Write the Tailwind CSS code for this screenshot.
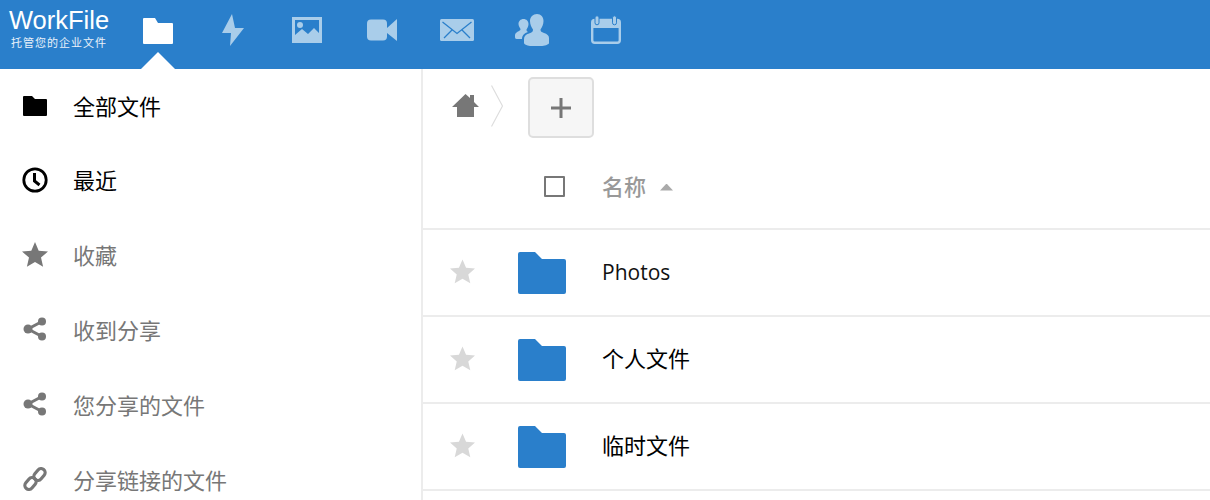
<!DOCTYPE html>
<html lang="zh-CN">
<head>
  <meta charset="UTF-8">
  <title>WorkFile</title>
  <script src="https://cdn.jsdelivr.net/npm/@tailwindcss/browser@4"></script>
</head>
<body class="bg-white h-[500px] overflow-hidden font-['Noto_Sans_CJK_SC',sans-serif]">

  <!-- Top bar -->
  <header class="flex h-[69px] bg-[#2a7fcb]">
    <div class="w-[120px] pl-[9px] pt-[6px] text-white">
      <div class="font-['Liberation_Sans',sans-serif] text-[25.500px] leading-[28px]">WorkFile</div>
      <div class="pl-[2px] text-[11px] leading-[16px] tracking-[1px] whitespace-nowrap text-white/90">托管您的企业文件</div>
    </div>
    <nav class="flex">
      <a class="relative w-[75px] flex justify-center pt-[18px]">
        <svg width="30" height="26" viewBox="0 0 30 26" fill="#fff"><path d="M1 0h11l3 5h14a1 1 0 0 1 1 1v19a1 1 0 0 1-1 1H1a1 1 0 0 1-1-1V1a1 1 0 0 1 1-1z"/></svg>
        <span class="absolute left-[21px] bottom-0 w-[34px] h-[17px] bg-white [clip-path:polygon(50%_0,100%_100%,0_100%)]"></span>
      </a>
      <a class="w-[75px] flex justify-center pt-[14px]">
        <svg width="22" height="32" viewBox="0 0 22 32" fill="#a9cdea"><path d="M10 0L0 19h9l-1 13L22 14h-9z"/></svg>
      </a>
      <a class="w-[74px] flex justify-center pt-[17px]">
        <svg width="30" height="26" viewBox="0 0 30 26"><rect x="1.500" y="1.500" width="27" height="23" fill="none" stroke="#a9cdea" stroke-width="3"/><circle cx="8" cy="8" r="3" fill="#a9cdea"/><path d="M3 24v-6l7-6 6 5 6-6 5 5v8z" fill="#a9cdea"/></svg>
      </a>
      <a class="w-[75px] flex justify-center pt-[19px]">
        <svg width="30" height="22" viewBox="0 0 30 22" fill="#a9cdea"><rect width="20" height="21" y="0.5" rx="4"/><path d="M20 9l10-9v22L20 14z"/></svg>
      </a>
      <a class="w-[75px] flex justify-center pt-[19px]">
        <svg width="34" height="22" viewBox="0 0 34 22"><rect width="34" height="22" rx="1.5" fill="#a9cdea"/><path d="M2.500 3L17 14.500 31.500 3M4 19l8.500-8.500M30 19l-8.500-8.500" fill="none" stroke="#2a7fcb" stroke-width="1.300"/></svg>
      </a>
      <a class="w-[75px] flex justify-center pt-[14px]">
        <svg width="34" height="32" viewBox="0 0 34 32" fill="#a9cdea"><path d="M22 0c4 0 6.500 3 6.500 7 0 3.500-1.500 6.500-3 8.500 0 2 1 2.500 3.500 3.500 3 1 5 2.500 5 5v5c0 2-7 3.500-13 3.500S9 31 9 29v-4c0-3 2-4.500 5-5.500 3-1 4-1.500 4-4-1.500-2-3-5-3-8.500C15 3 18 0 22 0z"/><path d="M8.500 5c3 0 5 2.200 5 5 0 2-1 4-2 5.500 0 1.500.5 2 1.500 2.500-3.500 1-6 3.500-6 7H1.500C.5 25 0 24 0 23v-2c0-2 2-3 4-4 1-.5 1.500-1 1.500-2-1-1.500-2-3.200-2-5 0-2.800 2-5 5-5z"/></svg>
      </a>
      <a class="w-[74px] flex justify-center pt-[15px]">
        <svg width="30" height="29" viewBox="0 0 30 29"><rect x="1.200" y="5" width="27.600" height="22.800" rx="2.500" fill="none" stroke="#a9cdea" stroke-width="2.400"/><path d="M1 6h28v7H1z" fill="#a9cdea"/><rect x="4" y="0.800" width="4" height="9" rx="2" fill="#a9cdea" stroke="#2a7fcb" stroke-width="1"/><rect x="21.500" y="0.800" width="4" height="9" rx="2" fill="#a9cdea" stroke="#2a7fcb" stroke-width="1"/></svg>
      </a>
    </nav>
  </header>

  <div class="flex h-[431px]">
    <!-- Sidebar -->
    <aside class="w-[423px] shrink-0 border-r-2 border-[#ececec] text-[22px] text-[#777]">
      <a class="h-[73.500px] flex items-center text-black">
        <span class="w-[73px] pl-[23px] shrink-0">
          <svg width="24" height="20" viewBox="0 0 24 20" fill="#000"><path d="M1 0h8l3 3h11a1 1 0 0 1 1 1v15a1 1 0 0 1-1 1H1a1 1 0 0 1-1-1V1a1 1 0 0 1 1-1z"/></svg>
        </span>
        全部文件
      </a>
      <a class="h-[74.800px] flex items-center text-black">
        <span class="w-[73px] pl-[22px] shrink-0">
          <svg width="26" height="26" viewBox="0 0 26 26" fill="none" stroke="#000"><circle cx="13" cy="13" r="11.200" stroke-width="2.800"/><path d="M12.500 6v8l5 4" stroke-width="3"/></svg>
        </span>
        最近
      </a>
      <a class="h-[74.800px] flex items-center">
        <span class="w-[73px] pl-[22px] shrink-0">
          <svg width="26" height="25" viewBox="0 0 26 25" fill="#777"><path d="M13 0l3.700 8.700 9.300.8-7 6.100 2.100 9.200L13 20l-8.100 4.800L7 15.600 0 9.500l9.300-.8z"/></svg>
        </span>
        收藏
      </a>
      <a class="h-[74.800px] flex items-center">
        <span class="w-[73px] pl-[23px] shrink-0">
          <svg width="24" height="24" viewBox="0 0 24 24" fill="#777" stroke="#777"><path d="M19 4.500L5 12l14 7.500" fill="none" stroke-width="3"/><circle cx="19" cy="4.500" r="4" stroke="none"/><circle cx="5" cy="12" r="4.500" stroke="none"/><circle cx="19" cy="19.500" r="4" stroke="none"/></svg>
        </span>
        收到分享
      </a>
      <a class="h-[74.800px] flex items-center">
        <span class="w-[73px] pl-[23px] shrink-0">
          <svg width="24" height="24" viewBox="0 0 24 24" fill="#777" stroke="#777"><path d="M19 4.500L5 12l14 7.500" fill="none" stroke-width="3"/><circle cx="19" cy="4.500" r="4" stroke="none"/><circle cx="5" cy="12" r="4.500" stroke="none"/><circle cx="19" cy="19.500" r="4" stroke="none"/></svg>
        </span>
        您分享的文件
      </a>
      <a class="h-[74.800px] flex items-center">
        <span class="w-[73px] pl-[23px] shrink-0">
          <svg width="24" height="24" viewBox="0 0 24 24" fill="none" stroke="#777" stroke-width="3.200"><rect x="12.500" y="1" width="8" height="13" rx="4" transform="rotate(40 16.500 7.500)"/><rect x="3.500" y="10" width="8" height="13" rx="4" transform="rotate(40 7.500 16.500)"/></svg>
        </span>
        分享链接的文件
      </a>
    </aside>

    <!-- File list -->
    <main class="flex-1 min-w-0">
      <div class="h-[77px] flex items-center pl-[29px]">
        <svg class="mt-[-4px]" width="27" height="23" viewBox="0 0 27 23" fill="#777"><path d="M13.500 0L18 4V1h4v7l5 5h-5v10H5V13H0z"/></svg>
        <svg class="ml-[12px] mt-[-4px]" width="12" height="42" viewBox="0 0 12 42" fill="none" stroke="#ddd" stroke-width="1.200"><path d="M.5 .5L11.500 21 .5 41.500"/></svg>
        <button class="ml-[25px] mt-[-16px] translate-y-[8px] w-[66px] h-[61px] flex items-center justify-center rounded-[5px] border-2 border-[#dedede] bg-[#f6f6f6]">
          <svg width="20" height="20" viewBox="0 0 20 20" fill="#777"><path d="M8.500 0h3v8.500H20v3h-8.500V20h-3v-8.500H0v-3h8.500z"/></svg>
        </button>
      </div>
      <div class="h-[84px] flex items-center border-b-2 border-[#ececec]">
        <span class="w-[121px] shrink-0"></span>
        <span class="w-[21px] h-[21px] mt-[-1px] border-2 border-[#777] rounded-[1px] shrink-0"></span>
        <span class="ml-[37px] text-[22px] font-medium text-[#999] mt-[-3px]">名称</span>
        <span class="ml-[14px] w-[13px] h-[7px] bg-[#aaa] [clip-path:polygon(50%_0,100%_100%,0_100%)]"></span>
      </div>

      <div class="h-[87px] flex items-center border-b-2 border-[#ececec]">
        <svg class="ml-[27px] mt-[-3px]" width="25" height="25" viewBox="0 0 26 25" fill="#d8d8d8"><path d="M13 0l3.700 8.700 9.300.8-7 6.100 2.100 9.200L13 20l-8.100 4.800L7 15.600 0 9.500l9.300-.8z"/></svg>
        <svg class="ml-[43px] mt-[1px]" width="48" height="42" viewBox="0 0 48 42" fill="#2a7fcb"><path d="M2 0h15l7 7h22a2 2 0 0 1 2 2v31a2 2 0 0 1-2 2H2a2 2 0 0 1-2-2V2a2 2 0 0 1 2-2z"/></svg>
        <span class="ml-[36px] font-['Open_Sans',sans-serif] text-[21px] text-[#111] mt-[1px]">Photos</span>
      </div>
      <div class="h-[87px] flex items-center border-b-2 border-[#ececec]">
        <svg class="ml-[27px] mt-[-3px]" width="25" height="25" viewBox="0 0 26 25" fill="#d8d8d8"><path d="M13 0l3.700 8.700 9.300.8-7 6.100 2.100 9.200L13 20l-8.100 4.800L7 15.600 0 9.500l9.300-.8z"/></svg>
        <svg class="ml-[43px] mt-[1px]" width="48" height="42" viewBox="0 0 48 42" fill="#2a7fcb"><path d="M2 0h15l7 7h22a2 2 0 0 1 2 2v31a2 2 0 0 1-2 2H2a2 2 0 0 1-2-2V2a2 2 0 0 1 2-2z"/></svg>
        <span class="ml-[36px] text-[22px] text-black mt-[-5px]">个人文件</span>
      </div>
      <div class="h-[87px] flex items-center border-b-2 border-[#ececec]">
        <svg class="ml-[27px] mt-[-3px]" width="25" height="25" viewBox="0 0 26 25" fill="#d8d8d8"><path d="M13 0l3.700 8.700 9.300.8-7 6.100 2.100 9.200L13 20l-8.100 4.800L7 15.600 0 9.500l9.300-.8z"/></svg>
        <svg class="ml-[43px] mt-[1px]" width="48" height="42" viewBox="0 0 48 42" fill="#2a7fcb"><path d="M2 0h15l7 7h22a2 2 0 0 1 2 2v31a2 2 0 0 1-2 2H2a2 2 0 0 1-2-2V2a2 2 0 0 1 2-2z"/></svg>
        <span class="ml-[36px] text-[22px] text-black mt-[-5px]">临时文件</span>
      </div>
    </main>
  </div>
</body>
</html>
